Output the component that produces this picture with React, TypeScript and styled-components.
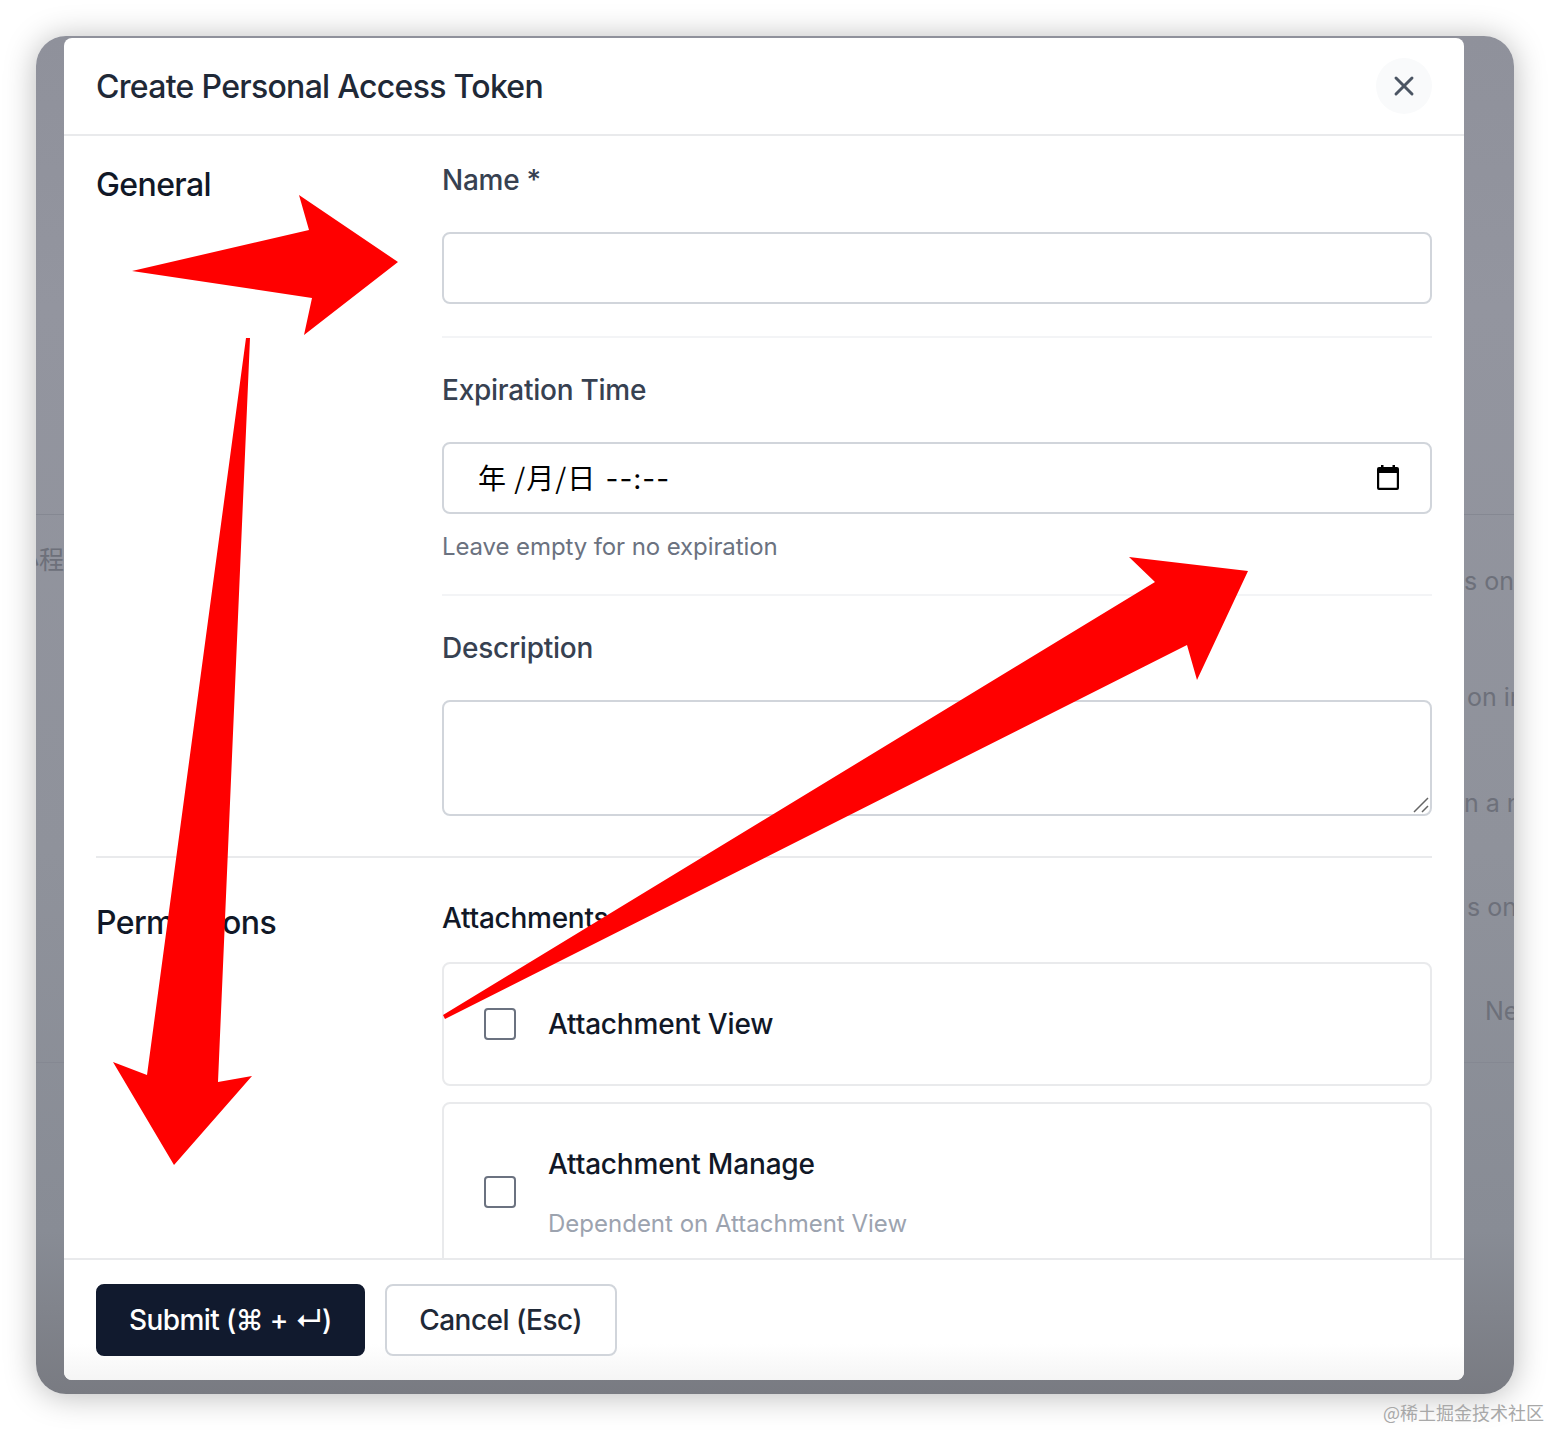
import React from "react";
import styled, { createGlobalStyle } from "styled-components";
import { X } from "lucide-react";

const GlobalStyle = createGlobalStyle`
  html, body {
    margin: 0;
    background: #fff;
  }
  * {
    box-sizing: border-box;
  }
`;

const Page = styled.div`
  position: relative;
  width: 1550px;
  height: 1430px;
  padding: 36px;
  overflow: hidden;
  font-family: Inter, "Noto Sans CJK SC", sans-serif;
`;

const Frame = styled.div`
  position: relative;
  display: flex;
  height: 100%;
  padding: 2px 50px 14px 28px;
  border-radius: 30px;
  overflow: hidden;
  background: linear-gradient(#8f919b 0, #93959f 20%, #8f929b 60%, #888c95 88%, #797b82 100%);
  box-shadow: 0 2px 32px rgba(0, 0, 0, 0.28);
`;

const BackdropText = styled.span<{ $x: number; $y: number }>`
  position: absolute;
  left: ${(p) => p.$x}px;
  top: ${(p) => p.$y}px;
  font-size: 25px;
  line-height: 30px;
  white-space: nowrap;
  color: #6d707a;
`;

const BackdropLine = styled.div<{ $y: number }>`
  position: absolute;
  left: 0;
  right: 0;
  top: ${(p) => p.$y}px;
  height: 1px;
  background: #858892;
`;

const Modal = styled.div`
  position: relative;
  flex: 1;
  display: flex;
  flex-direction: column;
  min-width: 0;
  background: #fff;
  border-radius: 8px;
  overflow: hidden;
`;

const Header = styled.header`
  display: flex;
  align-items: center;
  justify-content: space-between;
  height: 98px;
  padding: 0 32px;
  border-bottom: 2px solid #e9eaec;
`;

const Title = styled.h1`
  margin: 2px 0 0;
  font-size: 32px;
  line-height: 40px;
  font-weight: 500;
  letter-spacing: -0.7px;
  color: #1f2937;
`;

const CloseButton = styled.button`
  display: flex;
  align-items: center;
  justify-content: center;
  width: 56px;
  height: 56px;
  padding: 0;
  border: 0;
  border-radius: 50%;
  background: #f9fafb;
  color: #4b5563;
`;

const Body = styled.div`
  flex: 1;
  min-height: 0;
  padding: 0 32px;
  overflow: hidden;
`;

const Section = styled.section<{ $top: number; $divided?: boolean }>`
  display: grid;
  grid-template-columns: 346px 1fr;
  padding-top: ${(p) => p.$top}px;
  padding-bottom: ${(p) => (p.$divided ? 40 : 0)}px;
  border-bottom: ${(p) => (p.$divided ? "2px solid #e9eaec" : "none")};
`;

const SectionTitle = styled.h2`
  margin: 5px 0 0;
  font-size: 32px;
  line-height: 40px;
  font-weight: 500;
  letter-spacing: -0.6px;
  color: #111827;
`;

const Field = styled.div`
  & + & {
    margin-top: 32px;
    padding-top: 32px;
    border-top: 2px solid #f3f4f6;
  }
`;

const Label = styled.label<{ $strong?: boolean }>`
  display: block;
  margin-bottom: ${(p) => (p.$strong ? 24 : 32)}px;
  font-size: 28px;
  line-height: 40px;
  font-weight: 500;
  letter-spacing: -0.25px;
  color: ${(p) => (p.$strong ? "#111827" : "#374151")};
`;

const TextInput = styled.input`
  display: block;
  width: 100%;
  height: 72px;
  border: 2px solid #d1d5db;
  border-radius: 8px;
  background: #fff;
`;

const DateInput = styled.div`
  display: flex;
  align-items: center;
  justify-content: space-between;
  height: 72px;
  padding: 0 31px 0 34px;
  border: 2px solid #d1d5db;
  border-radius: 8px;
  font-size: 28px;
  color: #000;
`;

const DateText = styled.span`
  margin-top: -3px;
  font-family: "Noto Sans CJK SC", sans-serif;
  letter-spacing: 1px;
  white-space: pre;
`;

const TimeText = styled.span`
  margin-left: 2px;
  font-family: Inter, sans-serif;
  letter-spacing: 1px;
`;

const CalendarIcon = styled.svg`
  margin-top: -2px;
`;

const Help = styled.p`
  margin: 16px 0 -2px;
  font-size: 24px;
  line-height: 34px;
  letter-spacing: -0.1px;
  color: #6b7280;
`;

const TextBox = styled.div`
  position: relative;
  height: 116px;
  border: 2px solid #d1d5db;
  border-radius: 8px;
`;

const ResizeGrip = styled.svg`
  position: absolute;
  right: 0;
  bottom: 0;
`;

const PermissionCard = styled.div<{ $height: number }>`
  display: flex;
  align-items: center;
  gap: 32px;
  height: ${(p) => p.$height}px;
  margin-bottom: 16px;
  padding: 0 40px;
  border: 2px solid #e9eaec;
  border-radius: 8px;
`;

const Checkbox = styled.input`
  flex: none;
  appearance: none;
  width: 32px;
  height: 32px;
  margin: 0;
  border: 2px solid #6b7280;
  border-radius: 4px;
  background: #fff;
`;

const PermissionText = styled.div`
  display: flex;
  flex-direction: column;
  gap: 20px;
  padding-top: 4px;
`;

const PermissionName = styled.span`
  font-size: 28px;
  line-height: 40px;
  font-weight: 500;
  letter-spacing: -0.17px;
  color: #111827;
`;

const PermissionNote = styled.span`
  font-size: 24px;
  line-height: 40px;
  color: #9ca3af;
`;

const Footer = styled.footer`
  display: flex;
  gap: 20px;
  height: 122px;
  padding: 24px 32px;
  border-top: 2px solid #e9eaec;
  background: linear-gradient(#fff 70%, #f5f5f5 100%);
`;

const Button = styled.button<{ $primary?: boolean }>`
  height: 72px;
  padding: 0 ${(p) => (p.$primary ? 31 : 32.5)}px;
  border: 2px solid ${(p) => (p.$primary ? "#111a2e" : "#d1d5db")};
  border-radius: 8px;
  background: ${(p) => (p.$primary ? "#111a2e" : "#fff")};
  color: ${(p) => (p.$primary ? "#fff" : "#1f2937")};
  font-family: Inter, "DejaVu Sans", sans-serif;
  font-size: 28px;
  font-weight: 500;
  letter-spacing: ${(p) => (p.$primary ? -0.6 : -0.5)}px;
  white-space: nowrap;
`;

const ArrowLayer = styled.svg`
  position: absolute;
  top: 0;
  left: 0;
  pointer-events: none;
`;

const Watermark = styled.span`
  position: absolute;
  right: 6px;
  bottom: 6px;
  font-family: "Noto Sans CJK SC", sans-serif;
  font-size: 18px;
  line-height: 24px;
  color: #a8a8a8;
`;

// what shows of the page behind the dialog, in frame coordinates
const behind = [
  { text: "小程", x: -22, y: 509 },
  { text: "s on", x: 1428, y: 530 },
  { text: "on in", x: 1431, y: 646 },
  { text: "n a n", x: 1428, y: 752 },
  { text: "s on", x: 1431, y: 856 },
  { text: "Ne", x: 1449, y: 960 },
];

const arrows = [
  "132,271 309,230 299,195 398,262 304,335 312,298",
  "246,338 250,338 218,1082 252,1076 174,1165 113,1062 147,1075",
  "443,1015 1155,582 1129,557 1248,571 1197,680 1187,645 445,1019",
];

export default function App() {
  return (
    <Page>
      <GlobalStyle />
      <Frame>
        <BackdropLine $y={478} />
        <BackdropLine $y={1026} />
        {behind.map((b) => (
          <BackdropText key={b.text + b.y} $x={b.x} $y={b.y}>
            {b.text}
          </BackdropText>
        ))}
        <Modal>
          <Header>
            <Title>Create Personal Access Token</Title>
            <CloseButton aria-label="Close">
              <X size={32} strokeWidth={2.2} />
            </CloseButton>
          </Header>
          <Body>
            <Section $top={24} $divided>
              <SectionTitle>General</SectionTitle>
              <div>
                <Field>
                  <Label>Name *</Label>
                  <TextInput />
                </Field>
                <Field>
                  <Label>Expiration Time</Label>
                  <DateInput>
                    <DateText>
                      年 /月/日 <TimeText>--:--</TimeText>
                    </DateText>
                    <CalendarIcon width="22" height="25" viewBox="0 0 22 25">
                      <path d="M4 0h2.500v2h9V0H18v2h2a2 2 0 0 1 2 2v19a2 2 0 0 1-2 2H2a2 2 0 0 1-2-2V4a2 2 0 0 1 2-2h2V0zM2.200 8v14.800h17.600V8H2.200z" fill="#000" />
                    </CalendarIcon>
                  </DateInput>
                  <Help>Leave empty for no expiration</Help>
                </Field>
                <Field>
                  <Label>Description</Label>
                  <TextBox>
                    <ResizeGrip width="18" height="18" viewBox="0 0 18 18">
                      <path d="M2 16 16 2M10 16l6-6" stroke="#666" strokeWidth="1.5" fill="none" />
                    </ResizeGrip>
                  </TextBox>
                </Field>
              </div>
            </Section>
            <Section $top={40}>
              <SectionTitle>Permissions</SectionTitle>
              <div>
                <Label $strong>Attachments</Label>
                <PermissionCard $height={124}>
                  <Checkbox type="checkbox" />
                  <PermissionName>Attachment View</PermissionName>
                </PermissionCard>
                <PermissionCard $height={180}>
                  <Checkbox type="checkbox" />
                  <PermissionText>
                    <PermissionName>Attachment Manage</PermissionName>
                    <PermissionNote>Dependent on Attachment View</PermissionNote>
                  </PermissionText>
                </PermissionCard>
              </div>
            </Section>
          </Body>
          <Footer>
            <Button $primary>Submit (⌘ + ↵)</Button>
            <Button>Cancel (Esc)</Button>
          </Footer>
        </Modal>
      </Frame>
      <ArrowLayer width="1550" height="1430" viewBox="0 0 1550 1430">
        {arrows.map((points) => (
          <polygon key={points} points={points} fill="#ff0000" />
        ))}
      </ArrowLayer>
      <Watermark>@稀土掘金技术社区</Watermark>
    </Page>
  );
}
